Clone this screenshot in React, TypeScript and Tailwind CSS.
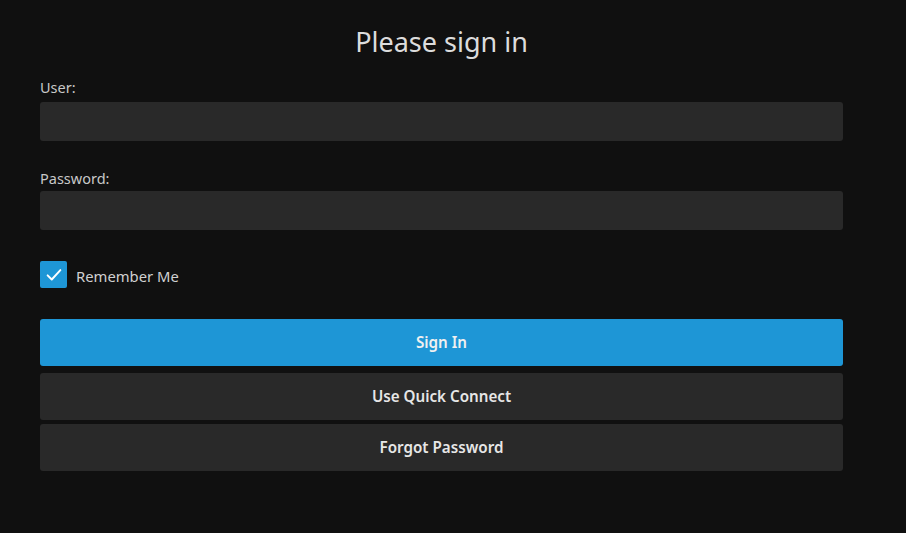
export default function App() {
  return (
    <main className="min-h-screen bg-[#101010] px-10 font-['Noto_Sans',sans-serif] text-[#d4d4d4]" style={{ width: 906, height: 533 }}>
      <div className="w-[803px]">
        <h1 className="pt-[24px] text-center text-[27px] leading-[36px] font-normal text-[#dcdcdc]">Please sign in</h1>

        <label className="mt-[17px] block text-[14.5px] leading-[20px] text-[#c8c8c8]">User:</label>
        <div className="mt-[5px] h-[39px] rounded-[3px] bg-[#292929]" />

        <label className="mt-[27px] block text-[14.5px] leading-[20px] text-[#c8c8c8]">Password:</label>
        <div className="mt-[3px] h-[39px] rounded-[3px] bg-[#292929]" />

        <div className="mt-[31px] flex items-center gap-[9px]">
          <div className="flex h-[27px] w-[27px] items-center justify-center rounded-[2px] bg-[#1e96d6]">
            <svg width="18" height="18" viewBox="0 0 24 24" fill="none" stroke="#ffffff" strokeWidth="2.6" strokeLinecap="round" strokeLinejoin="round">
              <path d="M3.5 12.5l5.5 5.5L20.5 5.5" />
            </svg>
          </div>
          <span className="pt-[3px] text-[14.8px] text-[#d0d0d0]">Remember Me</span>
        </div>

        <div className="mt-[31px] flex flex-col">
          <button className="h-[47px] rounded-[3px] bg-[#1e96d6] text-[15.2px] font-semibold text-[#f0f0f0]">Sign In</button>
          <button className="mt-[7px] h-[47px] rounded-[3px] bg-[#292929] text-[15.2px] font-semibold text-[#e6e6e6]">Use Quick Connect</button>
          <button className="mt-[4px] h-[47px] rounded-[3px] bg-[#292929] text-[15.2px] font-semibold text-[#e6e6e6]">Forgot Password</button>
        </div>
      </div>
    </main>
  );
}
